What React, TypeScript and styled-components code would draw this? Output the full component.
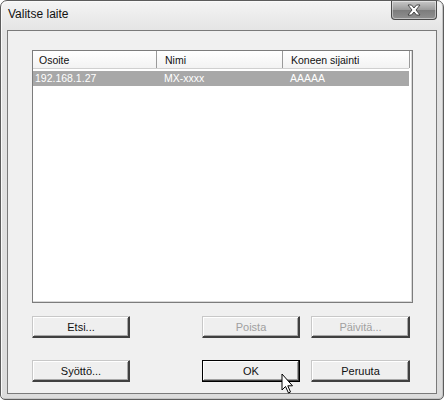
import styled, { createGlobalStyle } from "styled-components";

const GlobalStyle = createGlobalStyle`
  html, body {
    margin: 0;
    padding: 0;
    background: #ffffff;
  }
  * {
    box-sizing: border-box;
  }
`;

const Window = styled.div`
  position: relative;
  width: 444px;
  height: 400px;
  border: 1px solid #5c5c5c;
  border-radius: 7px 7px 5px 5px;
  background: linear-gradient(#f4f4f4 0px, #e4e4e4 30px, #dcdcdc 100%);
  box-shadow: inset 1px 1px 0 #fafafa, inset -1px -1px 0 #c4c4c4;
  display: flex;
  flex-direction: column;
  font-family: "Liberation Sans", Arial, sans-serif;
`;

const TitleBar = styled.div`
  height: 29px;
  display: flex;
  align-items: flex-start;
  justify-content: space-between;
`;

const Title = styled.span`
  margin: 6px 0 0 7px;
  font-family: "Liberation Sans", Arial, sans-serif;
  font-size: 12px;
  color: #111;
`;

const CloseButton = styled.div`
  width: 46px;
  height: 19px;
  margin-right: 6px;
  border: 1px solid #4a4a4a;
  border-top: none;
  border-radius: 0 0 4px 4px;
  background: linear-gradient(#c8c8c8, #9a9a9a 50%, #7c7c7c 51%, #909090);
  box-shadow: inset 0 0 0 1px rgba(255, 255, 255, 0.45);
  display: flex;
  align-items: center;
  justify-content: center;
`;

const ClientArea = styled.div`
  flex: 1;
  margin: 0 6px 5px 6px;
  border: 1px solid #7a7a7a;
  background: #f0f0f0;
  padding: 19px 23px 0 24px;
  display: flex;
  flex-direction: column;
`;

const ListBox = styled.div`
  width: 381px;
  height: 253px;
  background: #ffffff;
  border: 1px solid #7c7c7c;
  box-shadow: inset -1px -1px 0 #d8d8d8;
  padding: 0 3px 0 0;
  font-size: 10.5px;
`;

const HeaderRow = styled.div`
  display: grid;
  grid-template-columns: 124px 126px 127px;
  height: 18px;
  background: linear-gradient(#ffffff, #f3f3f3);
  border-bottom: 1px solid #d0d0d0;
`;

const HeaderCell = styled.div`
  border-right: 1px solid #9a9a9a;
  padding: 3px 0 0 8px;
  color: #111;

  &:first-child {
    padding-left: 6px;
  }
`;

const DataRow = styled.div<{ $selected?: boolean }>`
  display: grid;
  grid-template-columns: 124px 126px 127px;
  height: 15px;
  margin-top: 2px;
  background: ${(p) => (p.$selected ? "#a8a8a8" : "transparent")};
  color: ${(p) => (p.$selected ? "#ffffff" : "#111")};
`;

const DataCell = styled.div`
  padding: 1px 0 0 7px;
  white-space: nowrap;

  &:first-child {
    padding-left: 2px;
  }
`;

const ButtonRow = styled.div<{ $top: number }>`
  display: flex;
  margin-top: ${(p) => p.$top}px;
  width: 381px;
  padding-right: 3px;
`;

const Spacer = styled.div`
  flex: 1;
`;

const Button = styled.div<{ $disabled?: boolean; $default?: boolean; $w?: number }>`
  width: ${(p) => p.$w ?? 98}px;
  height: 22px;
  margin-left: ${(p) => (p.$w ? 11 : 0)}px;
  background: #efefef;
  border: 1px solid ${(p) => (p.$default ? "#000" : "#c8c8c8")};
  box-shadow: ${(p) =>
    p.$default
      ? "inset -1px -1px 0 #404040, inset 1px 1px 0 #ffffff, inset -2px -2px 0 #a0a0a0"
      : "inset -1px -1px 0 #404040, inset 1px 1px 0 #ffffff, inset -2px -2px 0 #a8a8a8"};
  border-right-color: ${(p) => (p.$default ? "#000" : "#404040")};
  border-bottom-color: ${(p) => (p.$default ? "#000" : "#404040")};
  display: flex;
  align-items: center;
  justify-content: center;
  font-size: 11px;
  color: ${(p) => (p.$disabled ? "#a0a0a0" : "#111")};
`;

const Cursor = styled.svg`
  position: absolute;
  left: 280px;
  top: 372px;
`;

const columns = ["Osoite", "Nimi", "Koneen sijainti"];
const rows = [["192.168.1.27", "MX-xxxx", "AAAAA"]];

export default function App() {
  return (
    <>
      <GlobalStyle />
      <Window>
        <TitleBar>
          <Title>Valitse laite</Title>
          <CloseButton>
            <svg width="16" height="12" viewBox="0 0 16 12">
              <path
                d="M2 1 H5.5 L8 4 L10.5 1 H14 L10 6 L14 11 H10.5 L8 8 L5.5 11 H2 L6 6 Z"
                fill="#ffffff"
                stroke="#3a3a3a"
                strokeWidth="0.9"
                strokeLinejoin="round"
              />
            </svg>
          </CloseButton>
        </TitleBar>
        <ClientArea>
          <ListBox>
            <HeaderRow>
              {columns.map((c) => (
                <HeaderCell key={c}>{c}</HeaderCell>
              ))}
            </HeaderRow>
            {rows.map((r) => (
              <DataRow key={r[0]} $selected>
                {r.map((v) => (
                  <DataCell key={v}>{v}</DataCell>
                ))}
              </DataRow>
            ))}
          </ListBox>
          <ButtonRow $top={13}>
            <Button>Etsi...</Button>
            <Spacer />
            <Button $disabled>Poista</Button>
            <Button $disabled $w={99}>
              Päivitä...
            </Button>
          </ButtonRow>
          <ButtonRow $top={22}>
            <Button>Syöttö...</Button>
            <Spacer />
            <Button $default>OK</Button>
            <Button $w={99}>Peruuta</Button>
          </ButtonRow>
        </ClientArea>
        <Cursor width="14" height="22" viewBox="0 0 14 22">
          <path
            d="M1 1 V17 L4.5 13.5 L7.5 20 L9.5 19 L6.8 12.8 H11.5 Z"
            fill="#ffffff"
            stroke="#000000"
            strokeWidth="1"
            strokeLinejoin="round"
          />
        </Cursor>
      </Window>
    </>
  );
}
